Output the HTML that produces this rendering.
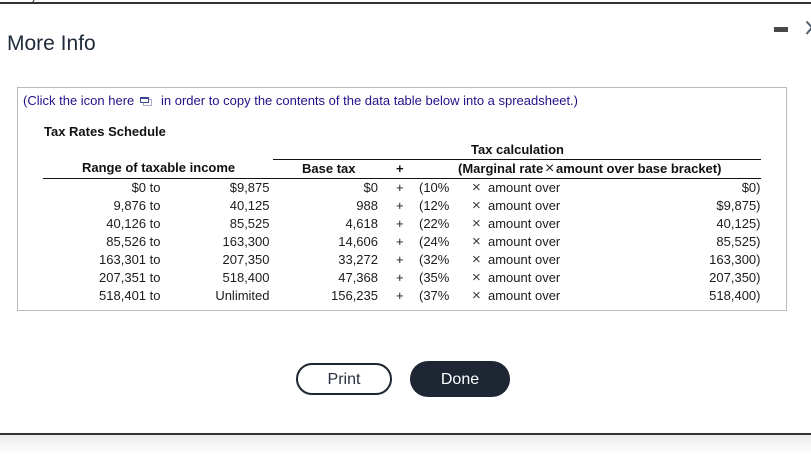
<!DOCTYPE html>
<html><head><meta charset="utf-8"><style>
html,body{margin:0;padding:0;background:#fff}
#p{position:relative;width:811px;height:456px;overflow:hidden;background:#fff;font-family:"Liberation Sans",Arial,sans-serif;font-size:13px;color:#1c1c1c}
#p div{position:absolute}
.r{left:0;width:811px;height:18px;line-height:18px}
.r span,.s{position:absolute;white-space:nowrap}
.a{left:60px;width:100.5px;text-align:right}
.b{left:170px;width:99.5px;text-align:right}
.c{left:300px;width:78px;text-align:right}
.d{left:396px}
.e{left:419px}
.f{left:472px;font-size:15px;color:#3a3a3a}
.g{left:488px}
.h{left:660px;width:100.5px;text-align:right}
b{font-weight:bold;color:#111}
</style></head><body><div id="p">
<div style="left:0;top:-10px;font-size:13px;line-height:12px;color:#222">dollar)</div>
<div style="left:0;top:2px;width:811px;height:2px;background:#333"></div>
<div style="left:7px;top:31px;font-size:21px;line-height:26px;color:#1f2a3a;white-space:nowrap">More Info</div>
<svg style="position:absolute;left:774px;top:20px" width="37" height="18"><rect x="0" y="7" width="14" height="5" fill="#484848"/><path d="M32.5 1.5L38 7.5L32.5 14" fill="none" stroke="#4f5f6e" stroke-width="2"/></svg>
<div style="left:17px;top:87px;width:768px;height:222px;border:1px solid #bbb"></div>
<div class="s" style="left:23px;top:92px;height:18px;line-height:18px;color:#25108a;font-size:13px">(Click the icon here</div>
<svg style="position:absolute;left:139px;top:96px" width="15" height="11"><rect x="4.5" y="3.5" width="8" height="6" fill="none" stroke="#a9aed0"/><rect x="1.5" y="1.5" width="8" height="5" fill="#fff" stroke="#3b4a90"/><rect x="1" y="1" width="9" height="2" fill="#3b4a90"/></svg>
<div class="s" style="left:161px;top:92px;height:18px;line-height:18px;color:#25108a;font-size:13px">in order to copy the contents of the data table below into a spreadsheet.)</div>
<div class="s" style="left:44px;top:123px;line-height:18px"><b>Tax Rates Schedule</b></div>
<div class="s" style="left:471px;top:141px;line-height:18px"><b>Tax calculation</b></div>
<div style="left:273px;top:159px;width:488px;height:1px;background:#111"></div>
<div class="s" style="left:82px;top:159px;line-height:18px"><b>Range of taxable income</b></div>
<div class="s" style="left:302px;top:160px;line-height:18px"><b>Base tax</b></div>
<div class="s" style="left:396px;top:160px;line-height:18px"><b>+</b></div>
<div class="s" style="left:458px;top:160px;line-height:18px"><b>(Marginal rate</b></div>
<div class="s" style="left:545px;top:160px;line-height:18px;font-size:16px">×</div>
<div class="s" style="left:556px;top:160px;line-height:18px"><b>amount over base bracket)</b></div>
<div style="left:43px;top:178px;width:718px;height:1px;background:#111"></div>
<div class="r" style="top:179px"><span class="a">$0 to</span><span class="b">$9,875</span><span class="c">$0</span><span class="d">+</span><span class="e">(10%</span><span class="f">×</span><span class="g">amount over</span><span class="h">$0)</span></div>
<div class="r" style="top:197px"><span class="a">9,876 to</span><span class="b">40,125</span><span class="c">988</span><span class="d">+</span><span class="e">(12%</span><span class="f">×</span><span class="g">amount over</span><span class="h">$9,875)</span></div>
<div class="r" style="top:215px"><span class="a">40,126 to</span><span class="b">85,525</span><span class="c">4,618</span><span class="d">+</span><span class="e">(22%</span><span class="f">×</span><span class="g">amount over</span><span class="h">40,125)</span></div>
<div class="r" style="top:233px"><span class="a">85,526 to</span><span class="b">163,300</span><span class="c">14,606</span><span class="d">+</span><span class="e">(24%</span><span class="f">×</span><span class="g">amount over</span><span class="h">85,525)</span></div>
<div class="r" style="top:251px"><span class="a">163,301 to</span><span class="b">207,350</span><span class="c">33,272</span><span class="d">+</span><span class="e">(32%</span><span class="f">×</span><span class="g">amount over</span><span class="h">163,300)</span></div>
<div class="r" style="top:269px"><span class="a">207,351 to</span><span class="b">518,400</span><span class="c">47,368</span><span class="d">+</span><span class="e">(35%</span><span class="f">×</span><span class="g">amount over</span><span class="h">207,350)</span></div>
<div class="r" style="top:287px"><span class="a">518,401 to</span><span class="b">Unlimited</span><span class="c">156,235</span><span class="d">+</span><span class="e">(37%</span><span class="f">×</span><span class="g">amount over</span><span class="h">518,400)</span></div>
<div style="left:296px;top:363px;width:92px;height:28px;border:2px solid #1e2533;border-radius:16px;text-align:center;line-height:29px;font-size:16px;color:#2a3040">Print</div>
<div style="left:410px;top:361px;width:100px;height:36px;background:#1e2533;border-radius:18px;text-align:center;line-height:37px;font-size:16px;color:#fff">Done</div>
<div style="left:0;top:433px;width:811px;height:2px;background:#333"></div>
<div style="left:0;top:435px;width:811px;height:21px;background:linear-gradient(#ececec,#fff)"></div>
</div></body></html>
